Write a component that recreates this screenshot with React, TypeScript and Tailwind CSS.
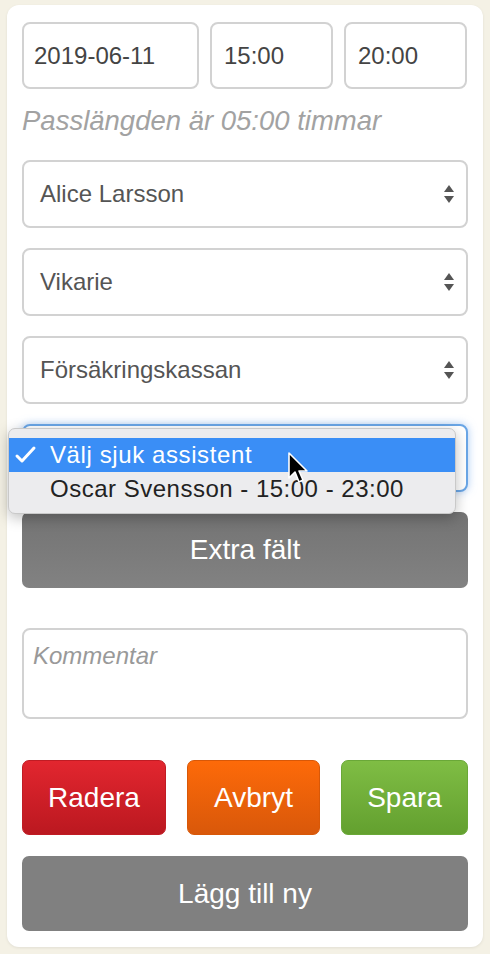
import React from "react";

const font = { fontFamily: '"Liberation Sans", Arial, sans-serif' };

function Arrows() {
  return (
    <svg width="12" height="22" viewBox="0 0 12 22" className="shrink-0">
      <path d="M6 2 L11 9 L1 9 Z" fill="#555" />
      <path d="M1 13 L11 13 L6 20 Z" fill="#555" />
    </svg>
  );
}

function Select({ label, focused }: { label: string; focused?: boolean }) {
  return (
    <div
      className={`flex h-[68px] items-center justify-between rounded-[8px] bg-white pl-[16px] pr-[11px] text-[24px] text-[#555] ${
        focused
          ? "border-2 border-[#6aa6e6] shadow-[0_0_8px_rgba(102,160,233,0.55)]"
          : "border-2 border-[#d2d2d2]"
      }`}
    >
      <span>{label}</span>
      <Arrows />
    </div>
  );
}

function Cursor() {
  return (
    <svg width="22" height="34" viewBox="0 0 22 34" className="absolute left-[278px] top-[22px]">
      <path
        d="M2 2 L2 27 L8 21 L12 31 L16 29 L12 20 L20 20 Z"
        fill="#000"
        stroke="#fff"
        strokeWidth="1.6"
        strokeLinejoin="round"
      />
    </svg>
  );
}

function DropdownMenu() {
  return (
    <div className="absolute left-[-14px] top-[4px] z-10 w-[448px] rounded-[7px] border border-[#c9c9c9] bg-[#ececee] pb-[7px] pt-[9px] shadow-[0_4px_14px_rgba(0,0,0,0.25)]">
      <div className="flex h-[34px] items-center bg-[#3a8ef6] text-[24px] text-white">
        <svg width="24" height="20" viewBox="0 0 24 20" className="ml-[5px] mr-[12px]">
          <path d="M3 11 L8 16 L20 3" fill="none" stroke="#fff" strokeWidth="3" strokeLinecap="round" strokeLinejoin="round" />
        </svg>
        <span className="tracking-[0.6px]">Välj sjuk assistent</span>
      </div>
      <div className="flex h-[34px] items-center pl-[41px] text-[24px] tracking-[0.5px] text-[#222]">
        Oscar Svensson - 15:00 - 23:00
      </div>
      <Cursor />
    </div>
  );
}

function Btn({ label, cls }: { label: string; cls: string }) {
  return (
    <div
      className={`flex h-[75px] items-center justify-center rounded-[7px] text-[28px] text-white ${cls}`}
    >
      {label}
    </div>
  );
}

export default function App() {
  return (
    <div className="h-[954px] w-[490px] bg-[#f4f1e5] pt-[5px]" style={font}>
      <div className="mx-[7px] h-[942px] rounded-[12px] bg-white px-[15px] pt-[17px] shadow-[0_1px_3px_rgba(0,0,0,0.08)]">
        <div className="flex gap-[11px] text-[24px] text-[#444]">
          <div className="flex h-[67px] w-[177px] items-center rounded-[8px] border-2 border-[#d2d2d2] pl-[10px]">
            2019-06-11
          </div>
          <div className="flex h-[67px] w-[123px] items-center rounded-[8px] border-2 border-[#d2d2d2] pl-[12px]">
            15:00
          </div>
          <div className="flex h-[67px] w-[123px] items-center rounded-[8px] border-2 border-[#d2d2d2] pl-[12px]">
            20:00
          </div>
        </div>
        <p className="mt-[11px] h-[60px] text-[27.5px] italic text-[#a2a2a2]">
          Passlängden är 05:00 timmar
        </p>
        <div className="flex flex-col gap-[20px]">
          <Select label="Alice Larsson" />
          <Select label="Vikarie" />
          <Select label="Försäkringskassan" />
          <div className="relative">
            <Select label="" focused />
            <DropdownMenu />
          </div>
          <Btn label="Extra fält" cls="h-[76px] bg-gradient-to-b from-[#737373] to-[#828282]" />
        </div>
        <div className="mt-[40px] h-[91px] rounded-[8px] border-2 border-[#d2d2d2] px-[9px] pt-[8px] text-[24px] italic text-[#999]">
          Kommentar
        </div>
        <div className="mt-[41px] flex justify-between">
          <Btn label="Radera" cls="w-[144px] border border-[#c01c24] bg-gradient-to-b from-[#e2262f] to-[#bb1820]" />
          <Btn label="Avbryt" cls="w-[133px] border border-[#d85808] bg-gradient-to-b from-[#fd6a09] to-[#d9580a]" />
          <Btn label="Spara" cls="w-[127px] border border-[#6aa838] bg-gradient-to-b from-[#7fbd44] to-[#63a02f]" />
        </div>
        <div className="mt-[21px]">
          <Btn label="Lägg till ny" cls="bg-[#808080]" />
        </div>
      </div>
    </div>
  );
}
